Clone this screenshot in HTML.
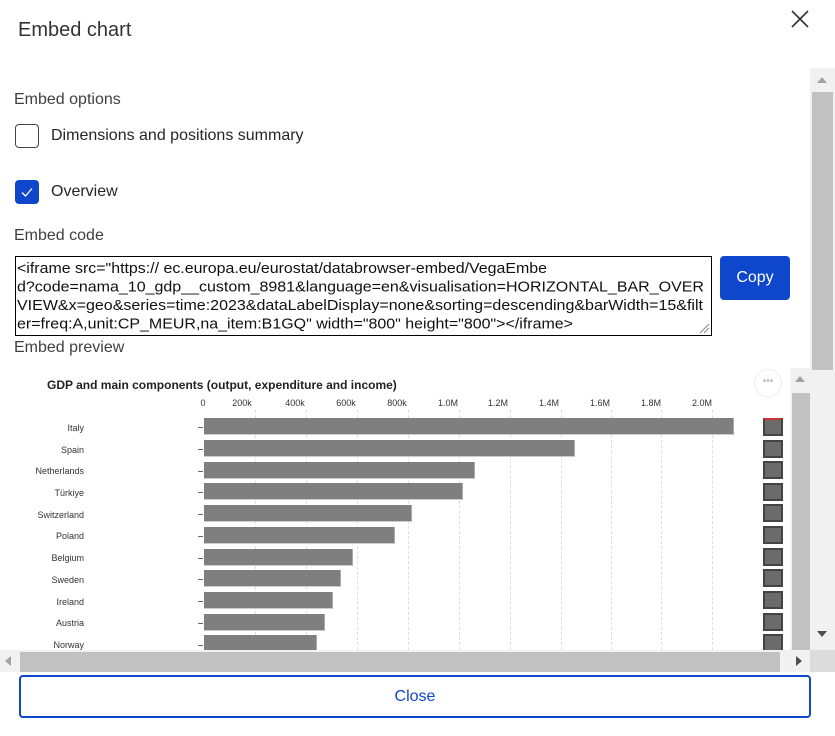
<!DOCTYPE html>
<html><head><meta charset="utf-8"><style>
*{box-sizing:border-box;margin:0;padding:0}
body{width:835px;height:736px;background:#fff;font-family:"Liberation Sans",Arial,sans-serif;color:#333;position:relative;overflow:hidden}
.a{position:absolute}
.lbl{font-size:16px;color:#404040}
.ctl{font-size:16px;color:#262626}
.cn{font-size:9px;color:#333;text-align:right;width:80px;left:4px}
.bar{position:absolute;left:204px;height:17px;background:#7f7f7f;border-right:1px solid #aaa;border-bottom:1px solid #ccc}
.tk{position:absolute;font-size:9px;color:#333;width:40px;text-align:center;top:398px}
.gl{position:absolute;top:410px;height:240px;border-left:1px dashed #ddd}
.mb{position:absolute;left:763px;width:20px;height:18px;background:#6b6b6b;border:2px solid #444}
.tm{position:absolute;left:198px;width:5px;border-top:1px solid #666}
</style></head><body>
<div class="a" style="left:18px;top:19px;font-size:20px;color:#333">Embed chart</div>
<svg class="a" style="left:790px;top:9px" width="20" height="20"><path d="M2 2L18 18M18 2L2 18" stroke="#333" stroke-width="1.6"/></svg>

<div class="a lbl" style="left:14px;top:91px">Embed options</div>
<div class="a" style="left:15px;top:124px;width:24px;height:24px;border:1px solid #444;border-radius:4px"></div>
<div class="a ctl" style="left:51px;top:127px">Dimensions and positions summary</div>
<div class="a" style="left:15px;top:180px;width:24px;height:24px;background:#0e47cb;border-radius:4px"></div>
<svg class="a" style="left:15px;top:180px" width="24" height="24"><path d="M7 12.5L10.5 16L17 8.5" stroke="#fff" stroke-width="1.3" fill="none"/></svg>
<div class="a ctl" style="left:51px;top:183px">Overview</div>
<div class="a lbl" style="left:14px;top:227px">Embed code</div>
<div class="a" style="left:15px;top:256px;width:697px;height:80px;border:1px solid #000"></div>
<svg class="a" style="left:0;top:250px" width="720" height="90" font-family="Liberation Sans, Arial, sans-serif" font-size="15" fill="#111">
<text x="17" y="23" textLength="530" lengthAdjust="spacingAndGlyphs">&lt;iframe src="https:// ec.europa.eu/eurostat/databrowser-embed/VegaEmbe</text>
<text x="17" y="41.5" textLength="687" lengthAdjust="spacingAndGlyphs">d?code=nama_10_gdp__custom_8981&amp;language=en&amp;visualisation=HORIZONTAL_BAR_OVER</text>
<text x="17" y="60" textLength="686" lengthAdjust="spacingAndGlyphs">VIEW&amp;x=geo&amp;series=time:2023&amp;dataLabelDisplay=none&amp;sorting=descending&amp;barWidth=15&amp;filt</text>
<text x="17" y="78.5" textLength="556" lengthAdjust="spacingAndGlyphs">er=freq:A,unit:CP_MEUR,na_item:B1GQ" width="800" height="800"&gt;&lt;/iframe&gt;</text>
</svg>
<svg class="a" style="left:698px;top:322px" width="12" height="12"><path d="M2 11L11 2M6 11L11 6" stroke="#888"/></svg>
<div class="a" style="left:720px;top:256px;width:70px;height:44px;background:#0e47cb;border-radius:4px;color:#fff;font-size:16px;text-align:center;line-height:44px">Copy</div>
<div class="a lbl" style="left:14px;top:339px">Embed preview</div>

<div class="a" style="left:810px;top:68px;width:25px;height:582px;background:#f1f1f1"></div>
<div class="a" style="left:812px;top:92px;width:21px;height:278px;background:#c1c1c1"></div>
<svg class="a" style="left:816px;top:75px" width="12" height="10"><path d="M1 8L6 2L11 8Z" fill="#a3a3a3"/></svg>
<svg class="a" style="left:816px;top:629px" width="12" height="10"><path d="M1 2L6 8L11 2Z" fill="#505050"/></svg>

<div class="a" style="left:47px;top:378px;font-size:12px;font-weight:bold;color:#222">GDP and main components (output, expenditure and income)</div>
<div class="a" style="left:754px;top:369px;width:28px;height:28px;border:1px solid #eee;border-radius:50%;text-align:center;font-size:10px;line-height:24px;color:#bbb">•••</div>
<div class="tk" style="left:183px">0</div><div class="tk" style="left:222px">200k</div><div class="tk" style="left:275px">400k</div><div class="tk" style="left:326px">600k</div><div class="tk" style="left:377px">800k</div><div class="tk" style="left:428px">1.0M</div><div class="tk" style="left:478px">1.2M</div><div class="tk" style="left:529px">1.4M</div><div class="tk" style="left:580px">1.6M</div><div class="tk" style="left:631px">1.8M</div><div class="tk" style="left:682px">2.0M</div>
<div class="gl" style="left:255px"></div><div class="gl" style="left:306px"></div><div class="gl" style="left:357px"></div><div class="gl" style="left:408px"></div><div class="gl" style="left:459px"></div><div class="gl" style="left:510px"></div><div class="gl" style="left:561px"></div><div class="gl" style="left:611px"></div><div class="gl" style="left:661px"></div><div class="gl" style="left:712px"></div>

<div class="bar" style="top:418px;width:530px"></div><div class="a cn" style="top:423px">Italy</div><div class="tm" style="top:427px"></div>
<div class="bar" style="top:440px;width:371px"></div><div class="a cn" style="top:445px">Spain</div><div class="tm" style="top:449px"></div>
<div class="bar" style="top:462px;width:271px"></div><div class="a cn" style="top:466px">Netherlands</div><div class="tm" style="top:471px"></div>
<div class="bar" style="top:483px;width:259px"></div><div class="a cn" style="top:488px">Türkiye</div><div class="tm" style="top:492px"></div>
<div class="bar" style="top:505px;width:208px"></div><div class="a cn" style="top:510px">Switzerland</div><div class="tm" style="top:514px"></div>
<div class="bar" style="top:527px;width:191px"></div><div class="a cn" style="top:531px">Poland</div><div class="tm" style="top:536px"></div>
<div class="bar" style="top:549px;width:149px"></div><div class="a cn" style="top:553px">Belgium</div><div class="tm" style="top:558px"></div>
<div class="bar" style="top:570px;width:137px"></div><div class="a cn" style="top:575px">Sweden</div><div class="tm" style="top:579px"></div>
<div class="bar" style="top:592px;width:129px"></div><div class="a cn" style="top:597px">Ireland</div><div class="tm" style="top:601px"></div>
<div class="bar" style="top:614px;width:121px"></div><div class="a cn" style="top:618px">Austria</div><div class="tm" style="top:623px"></div>
<div class="bar" style="top:635px;width:113px"></div><div class="a cn" style="top:640px">Norway</div><div class="tm" style="top:645px"></div>

<div class="mb" style="top:418px;border-top-color:#c33"></div><div class="mb" style="top:440px"></div><div class="mb" style="top:461px"></div><div class="mb" style="top:483px"></div><div class="mb" style="top:504px"></div><div class="mb" style="top:526px"></div><div class="mb" style="top:548px"></div><div class="mb" style="top:569px"></div><div class="mb" style="top:591px"></div><div class="mb" style="top:613px"></div><div class="mb" style="top:634px"></div>

<div class="a" style="left:790px;top:368px;width:20px;height:282px;background:#f1f1f1"></div>
<div class="a" style="left:792px;top:393px;width:18px;height:257px;background:#c1c1c1"></div>
<svg class="a" style="left:794px;top:374px" width="12" height="10"><path d="M1 8L6 2L11 8Z" fill="#a3a3a3"/></svg>
<div class="a" style="left:0;top:650px;width:810px;height:22px;background:#f1f1f1"></div>
<div class="a" style="left:20px;top:652px;width:760px;height:20px;background:#c1c1c1"></div>
<svg class="a" style="left:3px;top:655px" width="10" height="12"><path d="M8 1L2 6L8 11Z" fill="#a3a3a3"/></svg>
<svg class="a" style="left:794px;top:655px" width="10" height="12"><path d="M2 1L8 6L2 11Z" fill="#505050"/></svg>
<div class="a" style="left:810px;top:650px;width:25px;height:22px;background:#dcdcdc"></div>

<div class="a" style="left:19px;top:675px;width:792px;height:43px;border:2px solid #0e47cb;border-radius:4px;color:#0e47cb;font-size:16px;text-align:center;line-height:39px">Close</div>
</body></html>
